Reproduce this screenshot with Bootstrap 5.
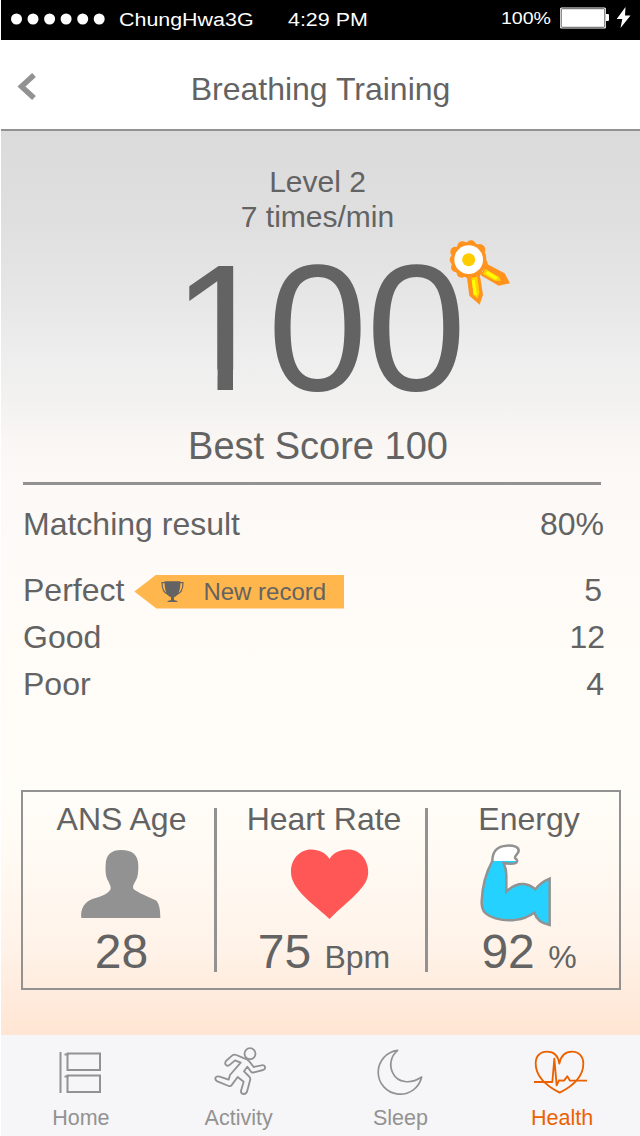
<!DOCTYPE html>
<html lang="en">
<head>
<meta charset="utf-8">
<meta name="viewport" content="width=device-width, initial-scale=1">
<title>Breathing Training</title>
<link href="https://cdn.jsdelivr.net/npm/bootstrap@5.3.0/dist/css/bootstrap.min.css" rel="stylesheet">
<style>
  body { font-family: "Liberation Sans", Arial, sans-serif; color: #636363; background: #fff; font-size: 32px; }
  svg { display: block; flex: none; overflow: visible; }
  .phone { width: 640px; height: 1136px; padding-left: 1px; overflow: hidden; }
  .status { height: 40px; background: #000; color: #fff; font-size: 18px; line-height: 40px; white-space: nowrap; }
  .wide { display: inline-block; transform-origin: 0 50%; transform: scaleX(1.19); }
  .carrier { width: 169px; margin-left: 13px; }
  .clock { width: 213px; }
  .charge { width: 58px; font-size: 17px; line-height: 37px; }
  .charge .wide { transform: scaleX(1.15); }
  .topbar { height: 91px; border-bottom: 2px solid #929292; background: #fff; padding-top: 9px; }
  .topbar h1 { font-size: 32px; line-height: 40px; }
  .back { left: 17px; top: 32px; }
  .screen { height: 904px; background: linear-gradient(#dbdbdb 0, #dfdfdf 10%, #e7e7e7 19%, #eeeeee 25%, #f3f2f1 30%, #f9f6f3 34%, #fcf9f6 39%, #fdfaf7 46%, #fffcf8 56%, #fffdf8 74%, #fff9f2 82%, #fff3e9 90%, #ffe5d3 100%); padding: 32.5px 19px 0 20px; }
  .level { font-size: 30px; line-height: 35px; padding-right: 7px; }
  .score { font-size: 180px; letter-spacing: -1.5px; line-height: 140px; margin-top: 24px; width: 296px; margin-left: 148px; }
  /* numeral one without its foot */
  .one { display: inline-block; position: relative; left: 3px; clip-path: polygon(0 0, 100% 0, 100% 112px, 61px 112px, 61px 100%, 45.5px 100%, 45.5px 112px, 0 112px); }
  .medal { left: 261px; top: -28px; }
  .best { font-size: 38px; line-height: 40px; margin-top: 28.5px; padding-right: 6px; }
  .rule { height: 3px; background: #929292; margin: 16px 20px 16px 2px; }
  .result { height: 47px; line-height: 47px; padding: 0 17px 0 2px; }
  .result-gap { height: 19px; }
  .flag { width: 210px; height: 34px; margin: 2px 0 0 10px; padding-left: 27px; background: #ffb74d; clip-path: polygon(0 50%, 22px 0, 100% 0, 100% 100%, 22px 100%); font-size: 24px; line-height: 34px; }
  .flag span { margin-left: 19px; }
  .vitals { height: 200px; border: 2px solid #929292; margin-top: 82px; }
  .vital { padding: 6.5px 0 0 5px; }
  .vital + .vital::before { content: ""; position: absolute; left: -1px; top: 16px; width: 2.5px; height: 164px; background: #929292; }
  .age { width: 192px; }
  .rate { width: 211px; padding-left: 7px; }
  .energy { width: 193px; padding-left: 13px; }
  .vital .caption { line-height: 40px; }
  .vital .value { font-size: 48px; line-height: 56px; }
  .vital .value span { font-size: 32px; }
  .tabs { height: 101px; background: #f6f6f8; color: #929292; font-size: 21.5px; }
  .tabs .item { width: 160px; }
  .tabs .item.on { color: #eb6100; }
  .tabs .text { line-height: 28px; }
  .result .five { margin-right: 2px; }
</style>
</head>
<body>
<div class="phone d-flex flex-column">
  <div class="status d-flex">
    <svg class="ms-2" width="97" height="40" viewBox="9 0 97 40" fill="#fff"><circle cx="16.5" cy="19" r="5.5"/><circle cx="33" cy="19" r="5.5"/><circle cx="49.6" cy="19" r="5.5"/><circle cx="66.1" cy="19" r="5.5"/><circle cx="82.7" cy="19" r="5.5"/><circle cx="99.2" cy="19" r="5.5"/></svg>
    <div class="carrier"><span class="wide">ChungHwa3G</span></div>
    <div class="clock"><span class="wide">4:29 PM</span></div>
    <div class="charge"><span class="wide">100%</span></div>
    <svg width="76" height="40" viewBox="559 0 76 40"><rect x="560" y="7.5" width="46" height="21" rx="1.5" fill="#fff"/><rect x="561.2" y="8.7" width="43.6" height="18.6" rx="1" fill="none" stroke="#333" stroke-width=".8"/><path d="M606 14h2q1 0 1 1v5q0 1-1 1h-2z" fill="#fff"/><path d="M625.500 7L616.700 19H622.300L620.500 28L630.500 15.500H625Z" fill="#fff"/></svg>
  </div>

  <header class="topbar position-relative d-flex align-items-center justify-content-center">
    <svg class="back position-absolute" width="20" height="28" viewBox="18 72 20 28" fill="none" stroke="#929292" stroke-width="5.500"><path d="M34 75L21.500 86.500L34 98"/></svg>
    <h1 class="m-0 fw-normal">Breathing Training</h1>
  </header>

  <main class="screen">
    <div class="level text-center">Level 2<br>7 times/min</div>
    <div class="score position-relative"><span class="one">1</span>00
      <svg class="medal position-absolute" width="100" height="90" viewBox="0 0 300 270">
        <g fill="#ff931e"><path d="M110 136L118 197L149 224L159 194L149 132ZM170 101L224 130L240 160L206 167L152 136Z"/>
        <circle cx="116" cy="89" r="53"/><circle cx="123" cy="46" r="15"/><circle cx="97" cy="49" r="15"/><circle cx="76" cy="65" r="15"/><circle cx="74" cy="89" r="15"/><circle cx="78" cy="112" r="15"/><circle cx="95" cy="128" r="15"/><circle cx="118" cy="131" r="15"/><circle cx="142" cy="123" r="15"/><circle cx="157" cy="101" r="16"/><circle cx="154" cy="80" r="14"/><circle cx="149" cy="59" r="17"/></g>
        <path d="M124 143L142 140L148 190L142 206L130 193ZM166 117L207 140L212 152L195 152L159 132Z" fill="#ffd500"/><path d="M130 150L136 195M170 127L200 146" stroke="#ff0" stroke-width="9"/>
        <circle cx="116" cy="89" r="43" fill="#fff"/><circle cx="116" cy="89" r="19.500" fill="#fc0"/>
      </svg>
    </div>
    <div class="best text-center">Best Score 100</div>
    <div class="rule"></div>
    <div class="result d-flex justify-content-between"><span>Matching result</span><span>80%</span></div>
    <div class="result-gap"></div>
    <div class="result d-flex align-items-center"><span>Perfect</span>
      <div class="flag d-flex align-items-center"><svg width="23" height="22" viewBox="93 50 69 66" fill="#636363"><path d="M104 51H151C152 76 146 94 132 99V107Q142 108 144 113H111Q113 108 123 107V99C109 94 103 76 104 51Z"/><path d="M105 55H96C96 75 102 86 114 90M150 55H159C159 75 153 86 141 90" fill="none" stroke="#636363" stroke-width="3.500"/></svg><span>New record</span></div>
      <span class="five ms-auto">5</span></div>
    <div class="result d-flex justify-content-between pe-3"><span>Good</span><span>12</span></div>
    <div class="result d-flex justify-content-between"><span>Poor</span><span>4</span></div>

    <section class="vitals d-flex">
      <div class="vital age position-relative d-flex flex-column align-items-center">
        <div class="caption">ANS Age</div>
        <svg class="me-1" width="80" height="85" viewBox="240 177 240 255" fill="#929292"><path d="M364 210C397 210 415 224 415 258C415 290 411 296 402 311C398 318 398 326 403 329C425 344 447 350 467 361C477 367 481 390 481 414H244C240 387 255 365 277 357C296 351 318 347 330 331C335 324 330 315 325 304C317 289 316 276 317 254C318 223 334 210 364 210Z"/></svg>
        <div class="value">28</div>
      </div>
      <div class="vital rate position-relative d-flex flex-column align-items-center">
        <div class="caption">Heart Rate</div>
        <svg class="ms-2 ps-1" width="82" height="85" viewBox="291 839 78 85" fill="#ff5656"><path d="M329.500 919C319 909 306 900 298.500 890C294 884 291 879 291 871.500C291 859 300 849.500 311 849.500C319 849.500 326 853 329.500 859C333 853 340 849.500 348 849.500C360 849.500 368.200 860 368.200 872C368.200 880 363.500 886 359 891C350 901 339 909 329.500 919Z"/></svg>
        <div class="value">75 <span>Bpm</span></div>
      </div>
      <div class="vital energy position-relative d-flex flex-column align-items-center">
        <div class="caption">Energy</div>
        <svg width="100" height="85" viewBox="57 12 300 255"><defs><clipPath id="lvl"><rect x="50" y="78" width="240" height="200"/></clipPath><path id="arm" d="M97 78C97 50 112 33 140 32C162 31 177 36 176 48C175 57 164 61 165 68C166 73 173 72 171 79C169 87 155 88 131 84Q139 102 139 120V170C158 151 175 146 190 147Q209 148 226 163Q242 142 269 131V270Q232 263 223 233C190 256 146 262 107 250C75 240 64 228 65 199C67 151 76 116 97 78Z"/></defs><use href="#arm" fill="#fff"/><use href="#arm" fill="#25d2ff" clip-path="url(#lvl)"/><use href="#arm" fill="none" stroke="#929292" stroke-width="7.500"/></svg>
        <div class="value">92 <span>%</span></div>
      </div>
    </section>
  </main>

  <nav class="tabs d-flex">
    <div class="item d-flex flex-column align-items-center">
      <svg width="60" height="69" viewBox="50.500 1035 60 69" fill="none" stroke="#929292" stroke-width="2"><path d="M60 1052V1093M64 1054.500H68M64 1076.500H68"/><path d="M67 1053.500H99.500V1070H67ZM67 1075.500H99.500V1092H67Z"/></svg>
      <div class="text">Home</div></div>
    <div class="item d-flex flex-column align-items-center">
      <svg width="80" height="69" viewBox="1 0 240 207" fill="none" stroke="#929292" stroke-width="5.500" stroke-linejoin="round"><circle cx="148" cy="56" r="16.500"/><path d="M131 70L107 60Q100 57 94 62L76 78Q71 85 76 90Q82 95 88 89L103 76L120 83L88 120L84 134L57 125Q47 122 44 129Q43 136 52 140L84 153Q90 155 94 149L111 126L129 140L121 167Q120 176 128 177Q136 178 139 170L149 133Q149 127 144 123L130 109L140 95L150 109Q154 114 160 112L187 105Q195 102 193 95Q190 89 182 91L159 96L146 79Q140 72 131 70Z"/></svg>
      <div class="text pe-1">Activity</div></div>
    <div class="item d-flex flex-column align-items-center">
      <svg width="80" height="69" viewBox="0 15 240 207" fill="none" stroke="#929292" stroke-width="5" stroke-linejoin="round"><path d="M113 61A66 66 0 1 0 185 141C151 164 113 158 99 130C87 108 91 79 113 61Z"/></svg>
      <div class="text">Sleep</div></div>
    <div class="item on d-flex flex-column align-items-center">
      <svg width="80" height="69" viewBox="480 15 240 207" fill="none" stroke="#eb6100" stroke-width="5.500" stroke-linejoin="round"><path d="M598 101C595 79 582 65 561 65C541 65 527 78 527 100C527 144 563 170 599 188C638 168 670 142 670 101C670 79 656 65 637 65C615 65 602 79 598 101Z"/><path d="M522 156H577L583 86L590 166L597 151L612 152L622 139L630 152H681"/></svg>
      <div class="text ps-1">Health</div></div>
  </nav>
</div>
<script src="https://cdn.jsdelivr.net/npm/bootstrap@5.3.0/dist/js/bootstrap.bundle.min.js"></script>
</body>
</html>
